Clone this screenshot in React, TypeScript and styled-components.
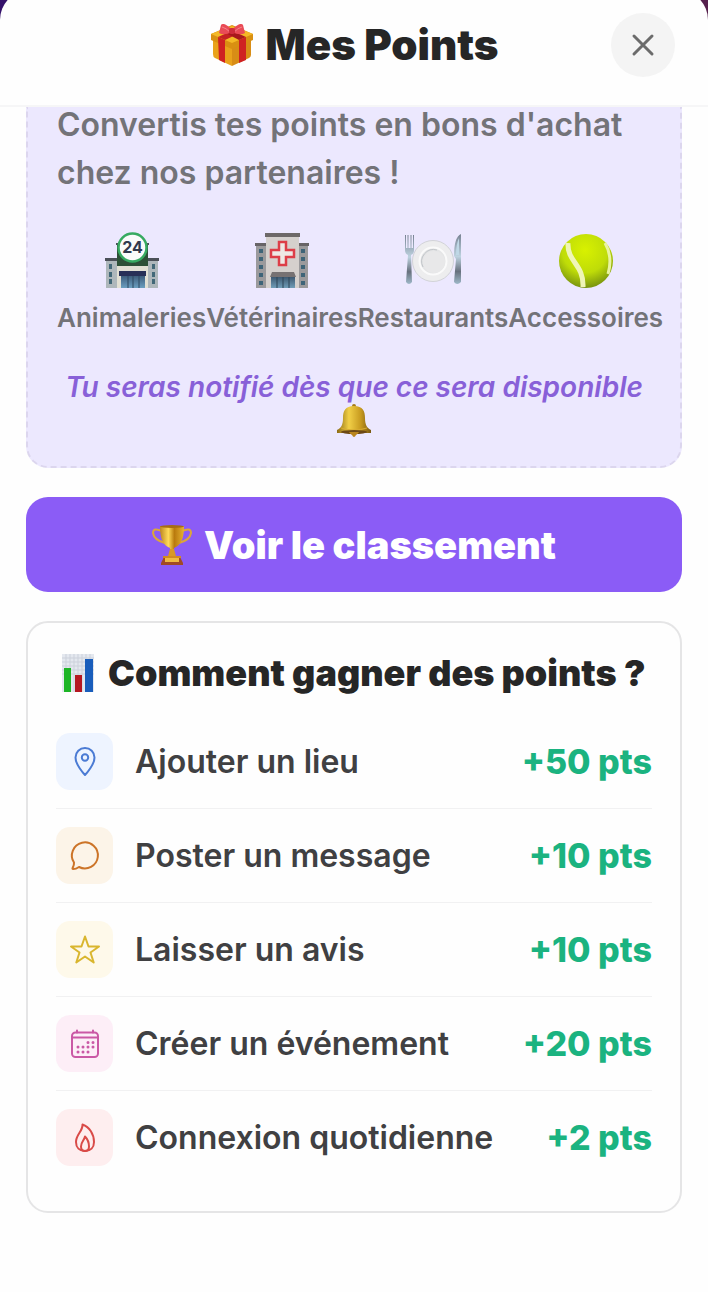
import React from 'react';
import styled, { createGlobalStyle } from 'styled-components';

const GlobalStyle = createGlobalStyle`
  *, *::before, *::after { box-sizing: border-box; }
  body {
    margin: 0;
    background: #fff;
    font-family: Inter, "Liberation Sans", sans-serif;
    color: #262626;
  }
  h1, h2, p, ul { margin: 0; padding: 0; }
  svg { display: block; flex-shrink: 0; }
`;

const Backdrop = styled.div`
  min-height: 100vh;
  display: flex;
  flex-direction: column;
  overflow: hidden;
  background: linear-gradient(90deg, #35126b, #56204d);
`;

const Sheet = styled.main`
  flex: 1;
  margin-top: -10px;
  padding-top: 10px;
  border-radius: 30px 30px 0 0;
  background: #fefefe;
`;

const Header = styled.header`
  display: grid;
  grid-template-columns: 64px 1fr 64px;
  align-items: center;
  height: 107px;
  padding: 0 33px 16px;
  border-bottom: 2px solid #f6f6f7;
`;

const Title = styled.h1`
  grid-column: 2;
  display: flex;
  align-items: center;
  justify-content: center;
  gap: 12px;
  font-size: 42px;
  line-height: 48px;
  font-weight: 900;
  white-space: nowrap;
`;

const CloseButton = styled.button`
  display: grid;
  place-items: center;
  width: 64px;
  height: 64px;
  padding: 0;
  border: 0;
  border-radius: 50%;
  background: #f4f4f4;
  color: #6b6b6b;
  cursor: pointer;
`;

const Content = styled.div`
  display: flex;
  flex-direction: column;
  gap: 29px;
  padding: 0 26px 79px;
`;

const RewardsCard = styled.section`
  display: flow-root;
  padding: 0 28px 28px;
  border: 2px dashed #dcd6ee;
  border-top: 0;
  border-radius: 0 0 22px 22px;
  background: #ece8fe;
  color: #737378;
`;

const Description = styled.p`
  margin-top: -6px;
  padding: 0 1px;
  font-size: 32px;
  line-height: 48px;
  font-weight: 600;
`;

const Partners = styled.ul`
  display: flex;
  margin: 35px 0 34px;
  padding: 0 1px;
  list-style: none;
`;

const Partner = styled.li`
  display: flex;
  flex-direction: column;
  align-items: center;
  gap: 10px;
  font-size: 26px;
  line-height: 36px;
  font-weight: 600;
  white-space: nowrap;
`;

const Notice = styled.p`
  display: flex;
  flex-direction: column;
  align-items: center;
  color: #8860d8;
  font-size: 28px;
  line-height: 34px;
  font-style: italic;
  font-weight: 600;
  text-align: center;
`;

const RankingButton = styled.button`
  display: flex;
  align-items: center;
  justify-content: center;
  gap: 12px;
  height: 95px;
  padding: 0 24px;
  border: 0;
  border-radius: 22px;
  background: #8b5cf6;
  color: #fff;
  font-family: inherit;
  font-size: 38px;
  font-weight: 900;
  cursor: pointer;
`;

const EarnCard = styled.section`
  padding: 28px 28px 27px;
  border: 2px solid #e5e5e6;
  border-radius: 22px;
`;

const EarnTitle = styled.h2`
  display: flex;
  align-items: center;
  gap: 13px;
  margin-bottom: 20px;
  padding-left: 5px;
  font-size: 36px;
  line-height: 44px;
  font-weight: 900;
  white-space: nowrap;
`;

const ActionList = styled.ul`
  list-style: none;
`;

const ActionRow = styled.li`
  display: flex;
  align-items: center;
  gap: 22px;
  padding: 18px 0;
  border-bottom: 1px solid #f1f1f2;

  &:last-child {
    border-bottom: 0;
  }
`;

const IconTile = styled.span<{ $background: string; $color: string }>`
  display: grid;
  place-items: center;
  width: 57px;
  height: 57px;
  border-radius: 14px;
  background: ${(p) => p.$background};
  color: ${(p) => p.$color};
`;

const ActionName = styled.span`
  flex: 1;
  color: #404042;
  font-size: 32px;
  line-height: 41px;
  font-weight: 600;
`;

const Points = styled.strong`
  color: #1bb380;
  font-size: 34px;
  line-height: 41px;
  font-weight: 800;
  white-space: nowrap;
`;

const GiftIcon = () => (
  <svg width="44" height="44" viewBox="0 0 44 44" aria-hidden="true">
    <path d="M3 16 22 24V43L5 35Q3 34 3 31Z" fill="#e9a21b" />
    <path d="M22 24 41 16V32Q41 34 39 35L22 43Z" fill="#d88d16" />
    <path d="M1 11 22 2 43 11V17L22 26 1 17Z" fill="#d99012" />
    <path d="M1 11 22 3 43 11 22 20Z" fill="#f4b926" />
    <path d="M8 14 15 17V40L9 37ZM29 17 36 14V37L29 40Z" fill="#cf2222" />
    <path d="M8 14 28 5 34 8 15 17Z" fill="#c52123" />
    <path d="M10 7 16 5 36 14 29 17Z" fill="#a8191c" />
    <path d="M22 7C17 1 12 0 11 2L9 10Q14 13 22 9ZM22 7C27 1 32 0 33 2L35 10Q30 13 22 9Z" fill="#e94b56" />
    <path d="M12 4Q16 5 20 9M32 4Q28 5 24 9" fill="none" stroke="#f4838a" strokeWidth="1" />
    <rect x="19" y="5" width="6" height="6" rx="2" fill="#cd2c3a" />
  </svg>
);

const StoreIcon = () => (
  <svg width="58" height="58" viewBox="0 0 58 58" aria-hidden="true">
    <defs>
      <linearGradient id="storeGlass" x2="0" y2="1">
        <stop stopColor="#3a5877" />
        <stop offset="1" stopColor="#6c9fc0" />
      </linearGradient>
    </defs>
    <path d="M3 28H14V56H3ZM45 28H55V56H45Z" fill="#aeb7bb" />
    <path d="M2 26H15V29H2ZM44 26H56V29H44ZM13 11H46V13H13Z" fill="#4b5058" />
    <path d="M14 13H45V34H14Z" fill="#2d5037" />
    <path d="M14 34H45V56H14Z" fill="#e2e0d4" />
    <path d="M6 32h3v5H6Zm0 8h3v5H6Zm0 7h3v5H6ZM49 32h3v5h-3Zm0 8h3v5h-3Zm0 7h3v5h-3Z" fill="#426878" />
    <path d="M18 43H42V56H18Z" fill="url(#storeGlass)" />
    <path d="M25 43V56M30 43V56M36 43V56" stroke="#2f4961" strokeWidth="1" />
    <path d="M16 39H43V44H16Z" fill="#283057" />
    <circle cx="29.500" cy="15.500" r="14" fill="#fafbfb" stroke="#37aa61" strokeWidth="2.500" />
    <text x="29.500" y="21" textAnchor="middle" fontFamily="Inter, sans-serif" fontSize="16" fontWeight="700" fill="#31384d">24</text>
  </svg>
);

const HospitalIcon = () => (
  <svg width="58" height="58" viewBox="0 0 58 58" aria-hidden="true">
    <defs>
      <linearGradient id="hospitalGlass" x2="0" y2="1">
        <stop stopColor="#39536b" />
        <stop offset="1" stopColor="#719db8" />
      </linearGradient>
    </defs>
    <path d="M3 13H13V56H3ZM46 13H55V56H46Z" fill="#9b9a9c" />
    <path d="M2 11H14V14H2ZM45 11H56V14H45Z" fill="#686467" />
    <path d="M13 3H46V56H13Z" fill="#d5d0cd" />
    <path d="M12 1H47V5H12Z" fill="#6d6868" />
    <path d="M6 17h4v4H6Zm0 8h4v4H6Zm0 8h4v4H6Zm0 8h4v4H6Zm0 8h4v4H6ZM48 17h4v4h-4Zm0 8h4v4h-4Zm0 8h4v4h-4Zm0 8h4v4h-4Zm0 8h4v4h-4Z" fill="#3e6478" />
    <path d="M26 10H33V18H41V25H33V33H26V25H18V18H26Z" fill="#eee8e5" stroke="#dd3e48" strokeWidth="2.500" />
    <path d="M18 44H42V56H18Z" fill="url(#hospitalGlass)" />
    <path d="M24 44V56M30 44V56M36 44V56" stroke="#2e4556" strokeWidth="1" />
    <path d="M19 40H41L43 45H17Z" fill="#777273" />
  </svg>
);

const PlateIcon = () => (
  <svg width="58" height="58" viewBox="0 0 58 58" aria-hidden="true">
    <defs>
      <linearGradient id="steel" x2="0" y2="1">
        <stop stopColor="#778292" />
        <stop offset=".45" stopColor="#bed3e0" />
        <stop offset=".75" stopColor="#68717e" />
        <stop offset="1" stopColor="#9fb9c9" />
      </linearGradient>
    </defs>
    <circle cx="29" cy="29" r="20.500" fill="#ededee" stroke="#d2d3d8" />
    <circle cx="29" cy="29" r="13.500" fill="#e4e5e6" stroke="#fafafa" strokeWidth="2" />
    <path d="M19 35A12 12 0 0 1 33 18" fill="none" stroke="#c1c5c9" />
    <circle cx="30" cy="30" r="11" fill="#e8e8e9" />
    <path d="M1 3V18Q1 22 4 23L2 50Q5 54 8 50L7 23Q10 22 10 18V3H9V16H7.500V3H6.500V16H4.500V3H3.500V16H2V3Z" fill="url(#steel)" />
    <path d="M57 2Q50 5 50 24L52 27 50 50Q53 54 57 50Z" fill="url(#steel)" />
    <path d="M55 6Q52 12 52 23H55Z" fill="#bfd8e6" />
  </svg>
);

const BallIcon = () => (
  <svg width="58" height="58" viewBox="0 0 58 58" aria-hidden="true">
    <defs>
      <radialGradient id="felt" cx=".48" cy=".3" r=".7">
        <stop stopColor="#d8f100" />
        <stop offset=".6" stopColor="#bfdc08" />
        <stop offset="1" stopColor="#78930f" />
      </radialGradient>
    </defs>
    <circle cx="29" cy="29" r="27" fill="url(#felt)" />
    <path d="M11 11C10 30 27 32 26 55" fill="none" stroke="#eff5b7" strokeWidth="5" />
    <path d="M48 11Q56 25 51 42" fill="none" stroke="#e9f3a1" strokeWidth="3" />
  </svg>
);

const BellIcon = () => (
  <svg width="36" height="34" viewBox="0 0 36 34" aria-hidden="true">
    <defs>
      <linearGradient id="brass">
        <stop stopColor="#8b6a14" />
        <stop offset=".35" stopColor="#f1cf47" />
        <stop offset=".7" stopColor="#c79a1f" />
        <stop offset="1" stopColor="#785811" />
      </linearGradient>
    </defs>
    <circle cx="18" cy="2" r="2" fill="#a57c18" />
    <path d="M18 2C9 2 7 7 7 14C7 21 5 24 1 26V29H35V26C31 24 29 21 29 14C29 7 27 2 18 2Z" fill="url(#brass)" />
    <path d="M5 24Q18 28 31 24" fill="none" stroke="#d8ac31" strokeWidth="1" />
    <ellipse cx="18" cy="28" rx="13" ry="2" fill="#6d4915" />
    <path d="M13 28Q14 30 16 31Q18 35 20 31Q22 30 23 28Z" fill="#b9841d" />
  </svg>
);

const TrophyIcon = () => (
  <svg width="40" height="42" viewBox="0 0 40 42" aria-hidden="true">
    <defs>
      <linearGradient id="gold">
        <stop stopColor="#bd8620" />
        <stop offset=".35" stopColor="#ffdb59" />
        <stop offset=".6" stopColor="#b97a0d" />
        <stop offset="1" stopColor="#e6b132" />
      </linearGradient>
    </defs>
    <path d="M10 7Q1 3 1 9Q2 16 13 19M30 7Q39 3 39 9Q38 16 27 19" fill="none" stroke="#dba63b" strokeWidth="2" />
    <path d="M8 2H32C32 15 29 21 22 24V30H18V24C11 21 8 15 8 2Z" fill="url(#gold)" />
    <ellipse cx="20" cy="2.500" rx="12" ry="1.500" fill="#a66d13" />
    <path d="M18 25H22L24 32H16Z" fill="#d99926" />
    <path d="M12 33H28L31 39V41H9V39Z" fill="#a14a24" />
    <path d="M13 34H27V38H13Z" fill="#efbb42" />
    <path d="M11 32H29V34H11Z" fill="#d28b21" />
  </svg>
);

const ChartIcon = () => (
  <svg width="34" height="40" viewBox="0 0 34 40" aria-hidden="true">
    <path d="M1 1H33V39H1Z" fill="#e4e8ef" />
    <path d="M1 5H33M1 9H33M1 13H33M1 17H33M1 21H33M5 1V39M9 1V39M13 1V39M17 1V39M21 1V39M25 1V39M29 1V39" stroke="#ccd1db" strokeWidth="1" />
    <path d="M3 15H10V39H3Z" fill="#1db526" />
    <path d="M14 22H21V39H14Z" fill="#b51721" />
    <path d="M24 6H32V39H24Z" fill="#195dbb" />
  </svg>
);

const LineIcon = ({ children }: { children: React.ReactNode }) => (
  <svg
    width="32"
    height="32"
    viewBox="0 0 32 32"
    fill="none"
    stroke="currentColor"
    strokeWidth="2"
    strokeLinecap="round"
    strokeLinejoin="round"
    aria-hidden="true"
  >
    {children}
  </svg>
);

const actions = [
  {
    name: 'Ajouter un lieu',
    points: '+50 pts',
    background: '#eef4ff',
    color: '#4b7bd4',
    icon: (
      <>
        <path d="M16 29C14.500 27.500 6.500 18.500 6.500 11.500A9.500 9.500 0 0 1 25.500 11.500C25.500 18.500 17.500 27.500 16 29Z" />
        <circle cx="16" cy="11.500" r="3.200" />
      </>
    ),
  },
  {
    name: 'Poster un message',
    points: '+10 pts',
    background: '#fcf4e8',
    color: '#cc7428',
    icon: <path d="M5 22.500A13 13 0 1 1 10 27Q7 29 4.200 29Q3 29 3.800 27.500Q5.200 25 5 22.500Z" />,
  },
  {
    name: 'Laisser un avis',
    points: '+10 pts',
    background: '#fef9ea',
    color: '#d9b62f',
    icon: <path d="M16 2.500 19.500 12.500H30L21.500 18.500 24.700 28.500 16 22.500 7.300 28.500 10.500 18.500 2 12.500H12.500Z" />,
  },
  {
    name: 'Créer un événement',
    points: '+20 pts',
    background: '#fdeef7',
    color: '#ca58a5',
    icon: (
      <>
        <rect x="3" y="4.500" width="26" height="24.500" rx="3.500" />
        <path d="M3 9.500H29M8 2.500V4.500M24 2.500V4.500" />
        <path d="M19 14.500h0M24 14.500h0M9 19h0M14 19h0M19 19h0M24 19h0M9 24h0M14 24h0M19 24h0" strokeWidth="3" />
      </>
    ),
  },
  {
    name: 'Connexion quotidienne',
    points: '+2 pts',
    background: '#feeeef',
    color: '#d94b48',
    icon: (
      <>
        <path d="M13.500 2.500C14 9 7 12.500 7 20C7 25.500 10.500 29 16 29C21.500 29 25 25.500 25 20C25 12 20.500 5 13.500 2.500Z" />
        <path d="M16 14.500C15.500 18 12 20 12 24.500C12 27.300 13.500 29 16 29C18.500 29 20 27.300 20 24.500C20 20 18.500 17 16 14.500Z" />
      </>
    ),
  },
];

const partners = [
  { name: 'Animaleries', icon: <StoreIcon /> },
  { name: 'Vétérinaires', icon: <HospitalIcon /> },
  { name: 'Restaurants', icon: <PlateIcon /> },
  { name: 'Accessoires', icon: <BallIcon /> },
];

export default function App() {
  return (
    <Backdrop>
      <GlobalStyle />
      <Sheet>
        <Header>
          <Title>
            <GiftIcon />
            Mes Points
          </Title>
          <CloseButton type="button" aria-label="Fermer">
            <svg width="24" height="24" viewBox="0 0 24 24" stroke="currentColor" strokeWidth="3" strokeLinecap="round" aria-hidden="true">
              <path d="M3 3 21 21M21 3 3 21" />
            </svg>
          </CloseButton>
        </Header>
        <Content>
          <RewardsCard>
            <Description>Convertis tes points en bons d'achat chez nos partenaires !</Description>
            <Partners>
              {partners.map((partner) => (
                <Partner key={partner.name}>
                  {partner.icon}
                  {partner.name}
                </Partner>
              ))}
            </Partners>
            <Notice>
              Tu seras notifié dès que ce sera disponible
              <BellIcon />
            </Notice>
          </RewardsCard>
          <RankingButton type="button">
            <TrophyIcon />
            Voir le classement
          </RankingButton>
          <EarnCard>
            <EarnTitle>
              <ChartIcon />
              Comment gagner des points ?
            </EarnTitle>
            <ActionList>
              {actions.map((action) => (
                <ActionRow key={action.name}>
                  <IconTile $background={action.background} $color={action.color}>
                    <LineIcon>{action.icon}</LineIcon>
                  </IconTile>
                  <ActionName>{action.name}</ActionName>
                  <Points>{action.points}</Points>
                </ActionRow>
              ))}
            </ActionList>
          </EarnCard>
        </Content>
      </Sheet>
    </Backdrop>
  );
}
